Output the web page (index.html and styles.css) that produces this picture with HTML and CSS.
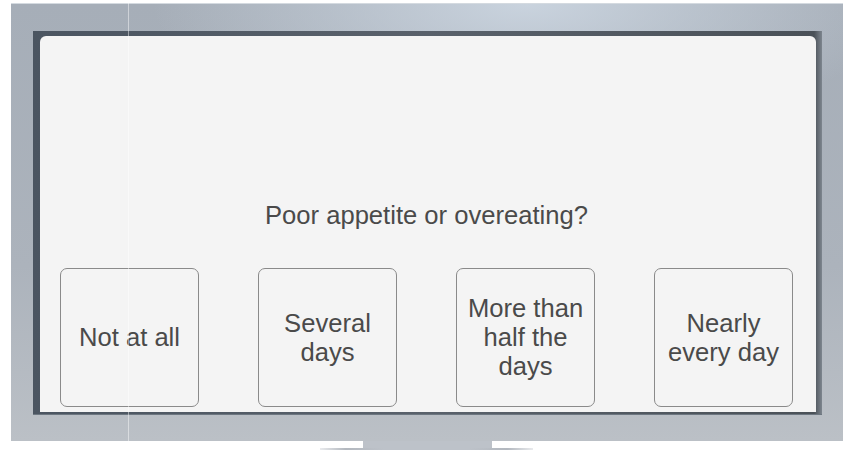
FILE: index.html
```html
<!DOCTYPE html>
<html>
<head>
<meta charset="utf-8">
<link rel="stylesheet" href="styles.css">
</head>
<body>
<div class="page">
  <div class="monitor">
    <div class="bezel">
      <div class="screen">
        <div class="question">Poor appetite or overeating?</div>
        <div class="answers">
          <div class="answer">Not at all</div>
          <div class="answer">Several<br>days</div>
          <div class="answer">More than<br>half the<br>days</div>
          <div class="answer">Nearly<br>every day</div>
        </div>
      </div>
    </div>
  </div>
  <div class="base">
    <div class="stand"></div>
  </div>
  <div class="streak"></div>
</div>
</body>
</html>
```
FILE: styles.css
```css
html, body {
  margin: 0;
  padding: 0;
  background: #ffffff;
}
.page {
  position: relative;
  width: 851px;
  height: 450px;
  overflow: hidden;
  padding-top: 3px;
  box-sizing: border-box;
  font-family: "Liberation Sans", Arial, sans-serif;
}
.monitor {
  margin-left: 11px;
  width: 832px;
  height: 438px;
  box-sizing: border-box;
  padding: 27px 21px 26px 22px;
  background:
    radial-gradient(ellipse 45% 30% at 62% 0%, rgba(205, 215, 226, 0.9), rgba(205, 215, 226, 0) 100%),
    linear-gradient(180deg, #a6aeb8 0%, #acb3bc 60%, #bbc0c6 100%);
  border-top: 1px solid #d4dae0;
}
.bezel {
  height: 100%;
  box-sizing: border-box;
  padding: 5px 6px 3px 7px;
  background: linear-gradient(90deg, #4b5561 0%, #59616b 50%, #4a5158 99%, #7d858e 100%);
  box-shadow: inset 0 -1px 0 #6c7680;
}
.screen {
  height: 100%;
  box-sizing: border-box;
  background: #f4f4f4;
  border-radius: 6px 6px 0 0;
  display: flex;
  flex-direction: column;
  padding: 165px 23px 5px 20px;
}
.question {
  font-size: 25.6px;
  line-height: 29px;
  color: #4a4a4a;
  text-align: center;
  margin-bottom: 38px;
}
.answers {
  display: flex;
  justify-content: space-between;
  height: 140px;
}
.answer {
  width: 139px;
  box-sizing: border-box;
  border: 1px solid #8a8a8a;
  border-radius: 7px;
  display: flex;
  align-items: center;
  justify-content: center;
  text-align: center;
  font-size: 25.6px;
  line-height: 29px;
  color: #4a4a4a;
}
.base {
  position: relative;
  height: 9px;
}
.stand {
  margin-left: 363px;
  width: 129px;
  height: 9px;
  background: #bdc2c9;
}
.base::after {
  content: "";
  position: absolute;
  left: 320px;
  top: 7px;
  width: 213px;
  height: 2px;
  background: linear-gradient(90deg, rgba(200,204,210,0.4) 0%, #b3b8bf 12%, #bdc2c9 30%, #bdc2c9 70%, #b3b8bf 88%, rgba(200,204,210,0.4) 100%);
}
.streak {
  position: absolute;
  left: 128px;
  top: 3px;
  width: 1px;
  height: 438px;
  background: rgba(255, 255, 255, 0.45);
}
```
